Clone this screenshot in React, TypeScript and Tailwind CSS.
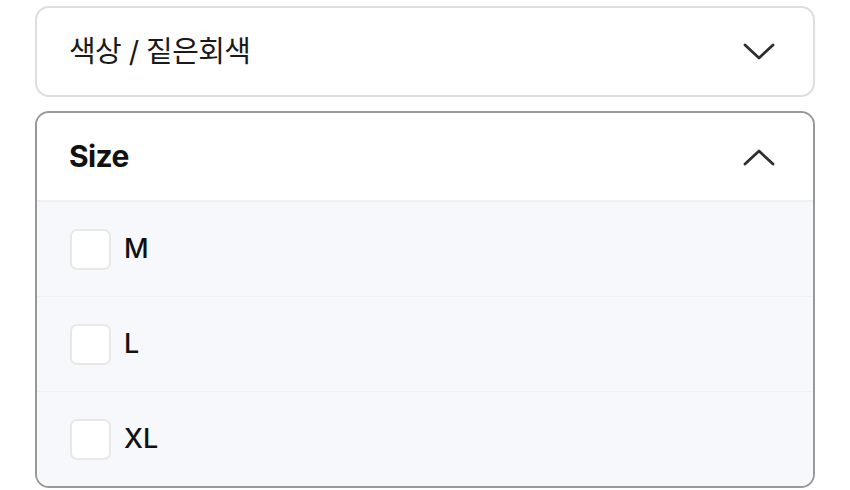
import { useState } from 'react';

const font = { fontFamily: 'Inter, "Noto Sans CJK KR", sans-serif' };

function Chevron({ up }: { up?: boolean }) {
  return (
    <svg width="32" height="18" viewBox="0 0 32 18" fill="none" className="shrink-0">
      <path
        d={up ? 'M2 16L16 3L30 16' : 'M2 2L16 15L30 2'}
        stroke="#2e2e2e"
        strokeWidth="2.8"
        strokeLinecap="round"
        strokeLinejoin="round"
      />
    </svg>
  );
}

const sizes = ['M', 'L', 'XL'];

export default function App() {
  const [checked, setChecked] = useState<Record<string, boolean>>({});

  return (
    <div className="w-[850px] h-[490px] bg-white px-[35px] pt-[6px] flex flex-col gap-[14px]" style={font}>
      {/* colour selector, closed */}
      <div className="h-[91px] rounded-[14px] border-2 border-[#dedede] flex items-center justify-between pl-[32px] pr-[38px]">
        <span className="text-[29px] text-[#1a1a1a] tracking-[-0.6px]">색상 / 짙은회색</span>
        <Chevron />
      </div>

      {/* size selector, open */}
      <div className="h-[377px] rounded-[14px] border-2 border-[#999] overflow-hidden flex flex-col">
        <div className="h-[89px] shrink-0 flex items-center justify-between pl-[32px] pr-[38px] bg-white border-b-2 border-[#eef0f3]">
          <span className="text-[30px] font-bold text-[#111] tracking-[-0.6px]">Size</span>
          <Chevron up />
        </div>
        <div className="flex-1 flex flex-col bg-[#f7f8fb]">
          {sizes.map((s, i) => (
            <label
              key={s}
              className={
                'flex-1 flex items-center gap-[13px] pl-[33px] cursor-pointer ' +
                (i < sizes.length - 1 ? 'border-b border-[#f0f1f4]' : '')
              }
            >
              <input
                type="checkbox"
                className="sr-only"
                checked={!!checked[s]}
                onChange={() => setChecked(prev => ({ ...prev, [s]: !prev[s] }))}
              />
              <span className="w-[41px] h-[41px] rounded-[7px] border-2 border-[#e8e8e8] bg-white flex items-center justify-center">
                {checked[s] && <span className="w-[20px] h-[20px] rounded-[3px] bg-[#333]" />}
              </span>
              <span className="text-[27px] font-medium text-[#111]">{s}</span>
            </label>
          ))}
        </div>
      </div>
    </div>
  );
}
